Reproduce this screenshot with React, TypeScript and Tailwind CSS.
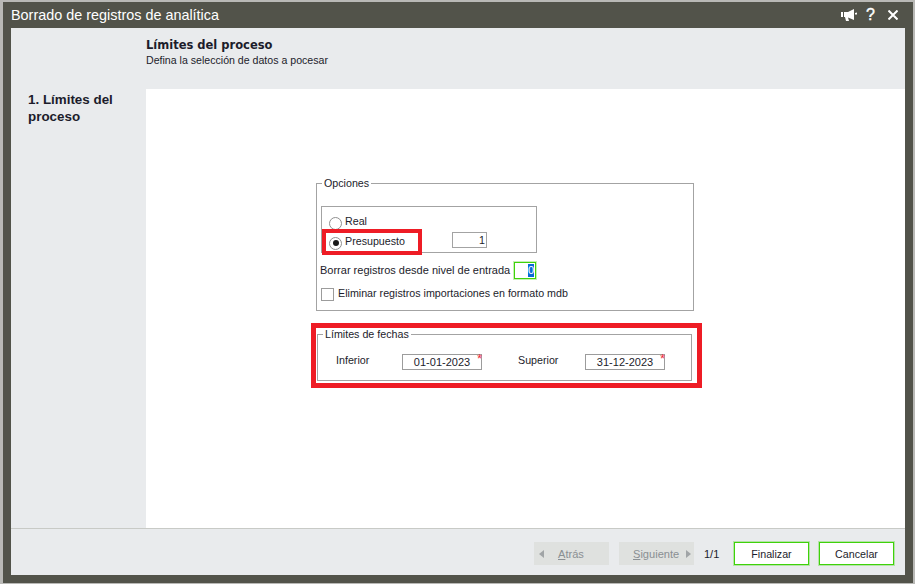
import type { ReactNode } from 'react'

const textFont = "font-['Liberation_Sans',sans-serif]"

function Radio({ checked = false }: { checked?: boolean }) {
  return (
    <span className="flex h-[13px] w-[13px] shrink-0 items-center justify-center rounded-full border border-[#8f8f8f] bg-white">
      {checked && <span className="h-[6px] w-[6px] rounded-full bg-[#1a1a1a]" />}
    </span>
  )
}

function Group({ title, className, children }: { title: string; className: string; children: ReactNode }) {
  return (
    <fieldset className={`border border-[#a3a3a3] ${className}`}>
      <legend className="ml-[5px] px-[2px] text-[10.7px] leading-[13px] text-[#1c1c2b]">{title}</legend>
      {children}
    </fieldset>
  )
}

function DateField({ value }: { value: string }) {
  return (
    <div className="relative flex h-[16px] w-[80px] items-center justify-center border border-[#9c9c9c] bg-white text-[11px] text-[#1c1c2b]">
      {value}
      <span className="absolute top-[-3px] right-[-1px] text-[13px] leading-[13px] text-[#ee2a3a]">*</span>
    </div>
  )
}

function NavButton({ className, children }: { className: string; children: ReactNode }) {
  return (
    <div className={`flex h-[23px] w-[75px] items-center bg-[#dfe1df] pt-[1px] text-[11.1px] text-[#8a8f93] ${className}`}>
      {children}
    </div>
  )
}

function ActionButton({ label }: { label: string }) {
  return (
    <div className="flex h-[23px] w-[75px] items-center justify-center border border-[#3fd20a] bg-white pt-[1px] text-[10.7px] text-[#1c1c2b] shadow-[0_0_0_1px_rgba(63,210,10,0.3)]">
      {label}
    </div>
  )
}

export default function App() {
  return (
    <div className={`h-[584px] w-[915px] bg-[#b9b9b6] pt-[2px] pr-[2px] pb-[1px] pl-[3px] ${textFont}`}>
      <div className="flex h-full flex-col bg-[#52534a] pr-[8px] pb-[8px] pl-[8px]">
        {/* title bar */}
        <div className="flex h-[26px] items-center justify-between">
          <span className="text-[14.4px] leading-[26px] text-white">Borrado de registros de analítica</span>
          <div className="mr-[7px] flex items-center text-white">
            <svg width="16" height="14" viewBox="0 0 16 14" fill="currentColor">
              <path d="M0 4h2v5H0zM3 4h4l6-3v11L7 9.5 8 13H5L4 9H3zM14 5l2-.6v2.2L14 6.5z" />
            </svg>
            <span className="ml-[9px] text-[16px] leading-none [-webkit-text-stroke:0.4px_white]">?</span>
            <svg className="ml-[13px]" width="10" height="10" viewBox="0 0 10 10" stroke="currentColor" strokeWidth="2" fill="none">
              <path d="M0.5 0.5l9 9M9.5 0.5l-9 9" />
            </svg>
          </div>
        </div>

        <div className="flex min-h-0 flex-1 flex-col bg-[#e9ebed]">
          <div className="flex min-h-0 flex-1 border-b border-[#c8cac6]">
            {/* steps */}
            <div className="w-[135px] shrink-0 pt-[63px] pl-[17px]">
              <p className="text-[13.4px] leading-[17px] font-bold text-[#1c1c2b]">
                1. Límites del
                <br />
                proceso
              </p>
            </div>

            <div className="flex min-w-0 flex-1 flex-col">
              {/* page header */}
              <div className="h-[61px] shrink-0 pt-[10px]">
                <p className="font-['DejaVu_Sans',sans-serif] text-[11.5px] leading-[15px] font-bold text-[#1c1c2b]">
                  Límites del proceso
                </p>
                <p className="text-[10.6px] leading-[15px] text-[#1c1c2b]">Defina la selección de datos a pocesar</p>
              </div>

              {/* form */}
              <div className="flex-1 bg-white pt-[88px] pl-[165px] text-[10.7px] text-[#1c1c2b]">
                <div className="ml-[5px] w-[378px]">
                  <Group title="Opciones" className="h-[134px]">
                    <div className="pl-[4px]">
                      <div className="relative mt-[16px] flex h-[47px] w-[216px] flex-col border border-[#a3a3a3] pt-[6px] pl-[7px]">
                        <div className="flex h-[20px] items-center gap-[3px]">
                          <Radio />
                          <span className="mb-[4px]">Real</span>
                        </div>
                        <div className="flex h-[20px] items-center gap-[3px]">
                          <Radio checked />
                          <span className="mb-[4px] w-[62px]">Presupuesto</span>
                          <div className="mb-[6px] ml-[42px] flex h-[16px] w-[35px] items-center justify-end border border-[#a3a3a3] pr-[1px]">
                            1
                          </div>
                        </div>
                        <div className="absolute top-[22px] left-[0px] h-[26px] w-[100px] border-4 border-[#ee1c25]" />
                      </div>
                      <div className="mt-[9px] ml-[-1px] flex h-[17px] items-center gap-[5px]">
                        <span className="w-[189px] text-[11px] whitespace-nowrap">Borrar registros desde nivel de entrada</span>
                        <div className="flex h-[17px] w-[22px] items-center justify-end overflow-hidden border border-[#3fd20a] bg-white pr-[1px] shadow-[0_0_0_1px_rgba(63,210,10,0.3)]">
                          <span className="h-[13px] w-[6px] bg-[#0a6ad6] text-[11px] leading-[13px] text-white">0</span>
                        </div>
                      </div>
                      <div className="mt-[6px] flex items-center gap-[4px]">
                        <span className="h-[13px] w-[13px] border border-[#9c9c9c] bg-white" />
                        <span className="mb-[3px]">Eliminar registros importaciones en formato mdb</span>
                      </div>
                    </div>
                  </Group>
                </div>

                <div className="mt-[12px] h-[65px] w-[391px] border-[5px] border-[#ee1c25] pr-[5px] pl-[1px]">
                  <Group title="Límites de fechas" className="h-[53px]">
                    <div className="flex h-[38px] items-center pt-[4px]">
                      <span className="mb-[4px] w-[84px] pl-[18px]">Inferior</span>
                      <DateField value="01-01-2023" />
                      <span className="mb-[4px] ml-[36px] w-[67px]">Superior</span>
                      <DateField value="31-12-2023" />
                    </div>
                  </Group>
                </div>
              </div>
            </div>
          </div>

          {/* footer */}
          <div className="flex h-[46px] shrink-0 items-start justify-end pt-[13px] pr-[11px]">
            <div className="flex items-center gap-[10px]">
              <NavButton className="gap-[14px] pl-[5px]">
                <span className="h-0 w-0 border-y-[4px] border-r-[5px] border-y-transparent border-r-[#a0a4a6]" />
                <span>
                  <span className="underline">A</span>trás
                </span>
              </NavButton>
              <NavButton className="gap-[7px] pl-[14px]">
                <span>
                  <span className="underline">S</span>iguiente
                </span>
                <span className="h-0 w-0 border-y-[4px] border-l-[5px] border-y-transparent border-l-[#a0a4a6]" />
              </NavButton>
              <span className="w-[20px] pt-[1px] text-[11px] text-[#1c1c2b]">1/1</span>
              <ActionButton label="Finalizar" />
              <ActionButton label="Cancelar" />
            </div>
          </div>
        </div>
      </div>
    </div>
  )
}
